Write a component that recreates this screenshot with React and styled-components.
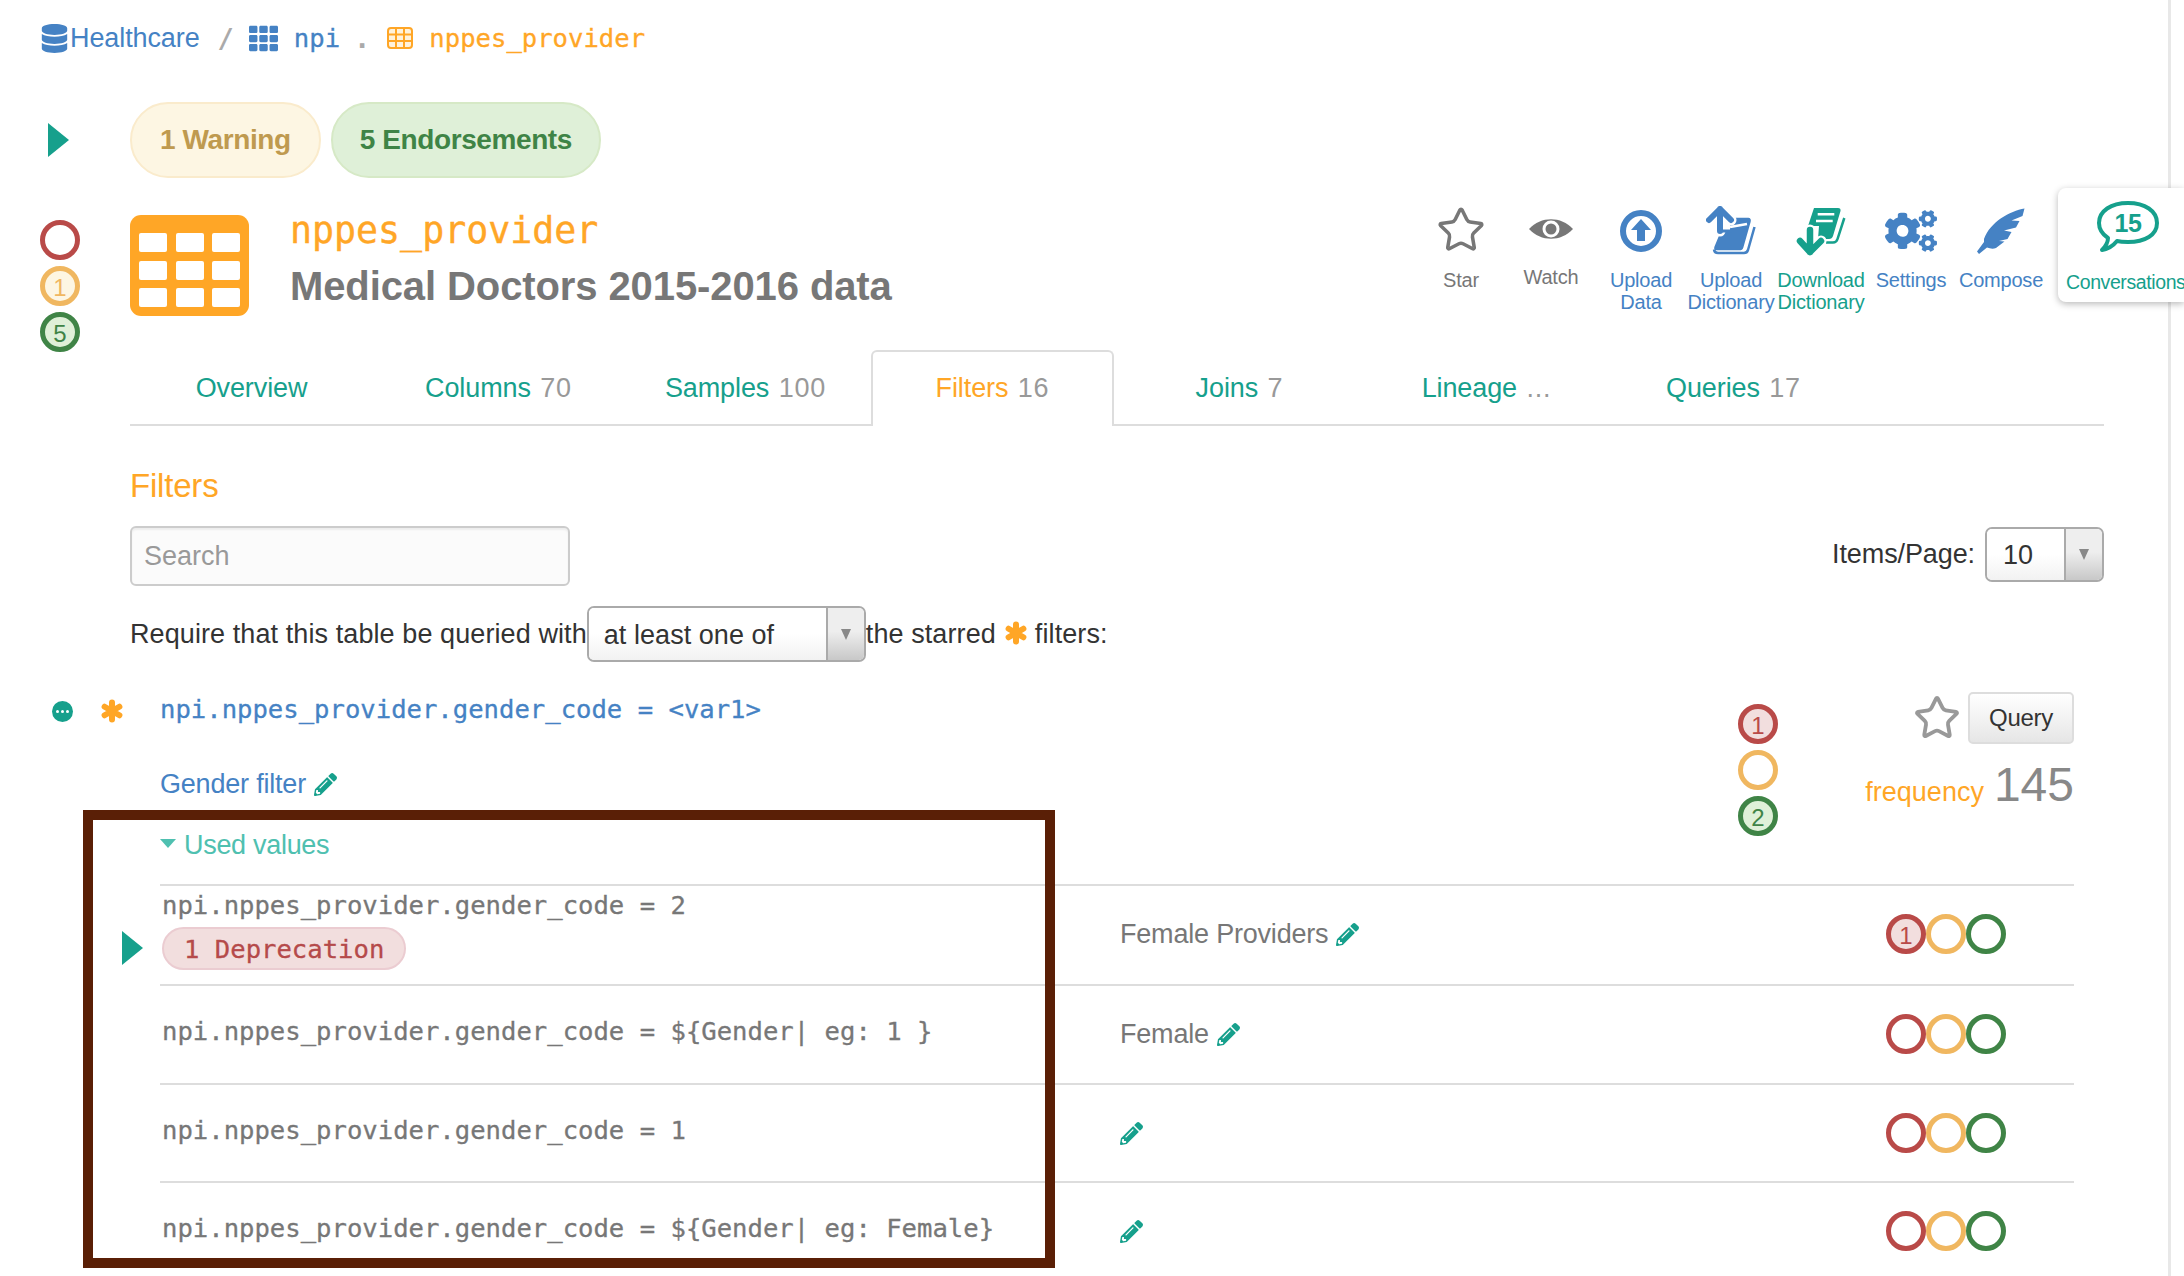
import styled, { createGlobalStyle } from 'styled-components';
import { Star } from 'lucide-react';
import { FaDatabase, FaTh, FaCogs, FaPencilAlt } from 'react-icons/fa';

const BLUE = '#4582c4';
const TEAL = '#16a08c';
const ORANGE = '#ffa626';
const GRAY = '#777';
const LINE = '#ddd';
const SANS = '"Liberation Sans", Arial, sans-serif';
const MONO = '"DejaVu Sans Mono", monospace';

const GlobalStyle = createGlobalStyle`
    html, body { margin: 0; padding: 0; background: #fff; }
    * { box-sizing: border-box; }
`;

const Page = styled.div`
    position: relative;
    width: 2184px;
    height: 1276px;
    overflow: hidden;
    background: #fff;
    font-family: ${SANS};
    font-size: 27px;
    color: #333;
`;

const ScrollTrack = styled.div`
    position: absolute;
    top: 0;
    right: 0;
    bottom: 0;
    width: 16px;
    border-left: 3px solid #e8e8e8;
    background: #fff;
`;

const Breadcrumb = styled.nav`
    position: relative;
    display: flex;
    align-items: center;
    height: 76px;
    padding-left: 40px;
    color: ${BLUE};
`;

const CrumbText = styled.span`
    margin-left: ${p => p.$gap || 0}px;
    font-family: ${p => (p.$mono ? MONO : SANS)};
    font-size: ${p => (p.$mono ? '25.6px' : '27px')};
    color: ${p => p.$color || BLUE};
    letter-spacing: ${p => (p.$mono ? 0 : '-0.1px')};
    -webkit-text-stroke: ${p => (p.$mono ? '0.3px' : 0)};
`;

const CrumbMark = styled.span`
    margin-left: ${p => p.$gap}px;
    font-family: ${MONO};
    font-size: 27px;
    font-weight: bold;
    color: #aaa;
`;

const CrumbIcon = styled.span`
    display: flex;
    margin-left: ${p => p.$gap || 0}px;
`;

const AlertRow = styled.div`
    display: flex;
    align-items: center;
    margin-top: 26px;
    padding-left: 48px;
    height: 76px;
`;

const Caret = styled.div`
    width: 0;
    height: 0;
    border-top: 17px solid transparent;
    border-bottom: 17px solid transparent;
    border-left: 21px solid ${TEAL};
`;

const Pills = styled.div`
    display: flex;
    gap: 10px;
    margin-left: 61px;
`;

const AlertPill = styled.div`
    display: flex;
    align-items: center;
    height: 76px;
    padding: 0 ${p => p.$pad}px;
    border-radius: 38px;
    border: 2px solid ${p => p.$border};
    background: ${p => p.$bg};
    color: ${p => p.$color};
    font-size: 28px;
    font-weight: bold;
    letter-spacing: -0.4px;
`;

const HeaderRow = styled.header`
    display: flex;
    height: 150px;
    margin-top: 22px;
`;

const SideStack = styled.div`
    display: flex;
    flex-direction: column;
    gap: 6px;
    width: 130px;
    padding: 20px 0 0 40px;
`;

const Circle = styled.div`
    display: flex;
    align-items: center;
    justify-content: center;
    flex: none;
    width: 40px;
    height: 40px;
    border-radius: 50%;
    border: 5px solid ${p => p.$color};
    background: ${p => p.$bg || '#fff'};
    color: ${p => p.$color};
    font-size: 24px;
    line-height: 1;
    padding-top: 3px;
`;

const BigIcon = styled.svg`
    flex: none;
    width: 119px;
    height: 101px;
    margin-top: 15px;
`;

const TitleBlock = styled.div`
    margin: 8px 0 0 41px;
`;

const TableName = styled.h1`
    margin: 0;
    font-family: ${MONO};
    font-size: 36.6px;
    font-weight: normal;
    line-height: 46px;
    color: ${ORANGE};
    -webkit-text-stroke: 0.4px;
`;

const TableDesc = styled.h2`
    margin: 9px 0 0;
    font-size: 40px;
    font-weight: bold;
    line-height: 46px;
    color: ${GRAY};
    letter-spacing: -0.1px;
`;

const Actions = styled.div`
    position: relative;
    z-index: 2;
    display: flex;
    align-items: flex-start;
    margin-left: auto;
`;

const Action = styled.div`
    display: flex;
    flex-direction: column;
    align-items: center;
    width: 90px;
    color: ${p => p.$color};
    font-size: 20px;
    line-height: 22px;
    text-align: center;
    letter-spacing: -0.2px;
    white-space: nowrap;
`;

const ActionIcon = styled.div`
    display: flex;
    align-items: center;
    justify-content: center;
    height: 62px;
    margin-bottom: ${p => p.$after ?? 7}px;
    padding-bottom: ${p => p.$raise || 0}px;
`;

const ConversationBox = styled.div`
    display: flex;
    flex-direction: column;
    width: 126px;
    height: 114px;
    margin: -12px 0 0 12px;
    padding: 11px 0 0 8px;
    border-radius: 8px 0 0 8px;
    background: #fff;
    box-shadow: 0 2px 7px rgba(0, 0, 0, 0.28);
    color: ${TEAL};
    font-size: 19.5px;
    letter-spacing: -0.4px;
    white-space: nowrap;
`;

const Bubble = styled.div`
    position: relative;
    width: 66px;
    height: 60px;
    margin: 0 0 12px 29px;
`;

const BubbleCount = styled.span`
    position: absolute;
    top: 10px;
    left: 0;
    width: 66px;
    text-align: center;
    font-size: 25px;
    font-weight: bold;
    line-height: 28px;
`;

const TabBar = styled.div`
    display: flex;
    gap: 4px;
    height: 76px;
    margin: 0 80px 0 130px;
    border-bottom: 2px solid ${LINE};
`;

const Tab = styled.div`
    width: 243px;
    height: ${p => (p.$active ? '76px' : '74px')};
    padding-top: ${p => (p.$active ? '21px' : '23px')};
    text-align: center;
    font-size: 27px;
    letter-spacing: -0.1px;
    color: ${p => (p.$active ? ORANGE : TEAL)};
    background: #fff;
    ${p => p.$active && `
        border: 2px solid ${LINE};
        border-bottom: none;
        border-radius: 6px 6px 0 0;
    `}
`;

const TabCount = styled.span`
    margin-left: 2px;
    color: #999;
    letter-spacing: 0.8px;
`;

const Content = styled.section`
    margin: 0 80px 0 130px;
`;

const Heading = styled.h3`
    margin: 40px 0 0;
    font-size: 33px;
    font-weight: normal;
    line-height: 40px;
    color: ${ORANGE};
    letter-spacing: -0.2px;
`;

const Toolbar = styled.div`
    display: flex;
    align-items: center;
    justify-content: space-between;
    margin-top: 20px;
    height: 60px;
`;

const SearchBox = styled.input`
    width: 440px;
    height: 60px;
    padding: 0 12px;
    border: 2px solid #ccc;
    border-radius: 6px;
    background: #fbfbfb;
    box-shadow: inset 0 2px 2px rgba(0, 0, 0, 0.06);
    font-family: ${SANS};
    font-size: 27px;
    &::placeholder { color: #999; opacity: 1; }
`;

const PageSize = styled.div`
    display: flex;
    align-items: center;
    gap: 10px;
    margin-top: -4px;
    letter-spacing: -0.1px;
`;

const Select = styled.div`
    display: flex;
    width: ${p => p.$width}px;
    height: ${p => p.$height}px;
    border: 2px solid #aaa;
    border-radius: 7px;
    overflow: hidden;
`;

const SelectValue = styled.div`
    flex: 1;
    display: flex;
    align-items: center;
    padding: 2px 0 0 ${p => p.$pad}px;
    background: linear-gradient(#fff 50%, #f2f2f2);
    color: #333;
    font-size: 27px;
    letter-spacing: 0.05px;
`;

const SelectArrow = styled.div`
    display: flex;
    align-items: center;
    justify-content: center;
    width: 38px;
    border-left: 2px solid #aaa;
    background: linear-gradient(#eee 45%, #c8c8c8);
    &::after {
        content: '';
        border-top: 11px solid #888;
        border-left: 5px solid transparent;
        border-right: 5px solid transparent;
    }
`;

const RequireRow = styled.div`
    display: flex;
    align-items: center;
    margin-top: 20px;
    height: 56px;
    line-height: 52px;
    letter-spacing: 0.09px;
    white-space: pre;
`;

const InlineStar = styled.span`
    display: flex;
    margin: -2px 7px 0 8px;
`;

const FilterBlock = styled.section`
    display: grid;
    grid-template-columns: 160px 1fr;
    margin-top: 30px;
    padding-right: 110px;
`;

const FilterGutter = styled.div`
    display: flex;
    align-items: flex-start;
    gap: 27px;
    padding: 7px 0 0 52px;
`;

const DotBadge = styled.div`
    display: flex;
    align-items: center;
    justify-content: center;
    gap: 2px;
    width: 21px;
    height: 21px;
    margin-top: 2px;
    border-radius: 50%;
    background: ${TEAL};
`;

const Dot = styled.i`
    width: 3px;
    height: 3px;
    border-radius: 50%;
    background: #fff;
`;

const FilterTop = styled.div`
    display: flex;
    height: 192px;
`;

const FilterInfo = styled.div`
    flex: 1;
`;

const FilterCode = styled.div`
    font-family: ${MONO};
    font-size: 25.6px;
    line-height: 34px;
    color: ${BLUE};
    -webkit-text-stroke: 0.3px;
`;

const FilterName = styled.div`
    display: flex;
    align-items: center;
    gap: 8px;
    margin-top: 41px;
    line-height: 34px;
    color: ${BLUE};
    letter-spacing: -0.2px;
`;

const UsedToggle = styled.div`
    display: flex;
    align-items: center;
    gap: 8px;
    margin-top: 27px;
    line-height: 34px;
    color: #4fc0b0;
    letter-spacing: -0.3px;
    &::before {
        content: '';
        margin-top: -4px;
        border-top: 9px solid #4fc0b0;
        border-left: 8px solid transparent;
        border-right: 8px solid transparent;
    }
`;

const FilterBadges = styled.div`
    display: flex;
    flex-direction: column;
    gap: 6px;
    margin-top: 12px;
`;

const FilterStats = styled.div`
    display: flex;
    flex-direction: column;
    align-items: flex-end;
    width: 296px;
`;

const QueryRow = styled.div`
    display: flex;
    align-items: center;
    gap: 7px;
`;

const QueryButton = styled.button`
    width: 106px;
    height: 52px;
    border: 2px solid ${LINE};
    border-radius: 5px;
    background: linear-gradient(#fff, #e6e6e6);
    font-family: ${SANS};
    font-size: 24px;
    letter-spacing: -0.3px;
    color: #333;
`;

const FrequencyRow = styled.div`
    display: flex;
    align-items: baseline;
    gap: 10px;
    margin-top: 13px;
    line-height: 56px;
`;

const FrequencyLabel = styled.span`
    font-size: 27px;
    color: ${ORANGE};
`;

const FrequencyValue = styled.span`
    font-size: 48px;
    color: #888;
`;

const ValueRow = styled.div`
    position: relative;
    display: grid;
    grid-template-columns: 960px 766px 188px;
    height: ${p => p.$height}px;
    border-top: 2px solid ${LINE};
`;

const RowCaret = styled(Caret)`
    position: absolute;
    left: -38px;
    top: 45px;
`;

const ValueCode = styled.div`
    padding: 0 0 0 2px;
    font-family: ${MONO};
    font-size: 25.6px;
    line-height: ${p => (p.$first ? '34px' : '44px')};
    padding-top: ${p => (p.$first ? '2px' : '23px')};
    color: ${GRAY};
    white-space: pre;
    -webkit-text-stroke: 0.3px;
`;

const DeprecationPill = styled.div`
    display: inline-flex;
    align-items: center;
    height: 43px;
    margin-top: 5px;
    padding: 0 20px;
    border: 2px solid #ebccd1;
    border-radius: 22px;
    background: #f2dede;
    color: #b54a4a;
`;

const ValueDesc = styled.div`
    display: flex;
    align-items: center;
    gap: 8px;
    align-self: start;
    height: 44px;
    margin-top: 26px;
    color: ${GRAY};
    letter-spacing: -0.2px;
`;

const ValueBadges = styled.div`
    display: flex;
    align-self: start;
    margin-top: 28px;
`;

const Pencil = styled(FaPencilAlt)`
    flex: none;
    color: ${TEAL};
    font-size: 23px;
`;

const Annotation = styled.div`
    position: absolute;
    left: 83px;
    top: 810px;
    width: 972px;
    height: 458px;
    border: 10px solid #5a1f06;
    pointer-events: none;
`;

const RED = { color: '#b94a48', bg: '#f2dede' };
const AMBER = { color: '#f0b760', bg: '#fdf6e3' };
const GREEN = { color: '#3f8446', bg: '#dff0d8' };

function Badge({ tone, count }) {
    return (
        <Circle $color={tone.color} $bg={count ? tone.bg : '#fff'}>
            {count}
        </Circle>
    );
}

function TableGlyph() {
    const xs = [9, 46, 82];
    const ys = [18, 46, 73];
    return (
        <BigIcon viewBox="0 0 119 101">
            <rect width="119" height="101" rx="11" fill={ORANGE} />
            {ys.map(y => xs.map(x => (
                <rect key={`${x}-${y}`} x={x} y={y} width="28" height="19" rx="2" fill="#fff" />
            )))}
        </BigIcon>
    );
}

function SmallTable() {
    return (
        <svg width="26" height="22" viewBox="0 0 26 22" fill="none" stroke={ORANGE}>
            <rect x="1" y="1" width="24" height="20" rx="3" strokeWidth="2" fill="#fff2dc" />
            <path d="M1 7.5H25M1 14H25M9 1V21M17 1V21" strokeWidth="2" />
        </svg>
    );
}

function AsteriskIcon() {
    return (
        <svg width="24" height="24" viewBox="0 0 24 24" fill="none" stroke={ORANGE} strokeWidth="6" strokeLinecap="round">
            <path d="M12 3.5V20.5M4.6 7.75L19.4 16.25M19.4 7.75L4.6 16.25" />
        </svg>
    );
}

function EyeIcon() {
    return (
        <svg width="44" height="20" viewBox="0 0 44 20">
            <path d="M0 10C12 -3 32 -3 44 10C32 23 12 23 0 10Z" fill={GRAY} />
            <circle cx="22" cy="10" r="8.5" fill="#fff" />
            <circle cx="22" cy="10" r="5.5" fill={GRAY} />
        </svg>
    );
}

function UploadIcon() {
    return (
        <svg width="42" height="42" viewBox="0 0 42 42">
            <circle cx="21" cy="21" r="18" fill="#fff" stroke={BLUE} strokeWidth="6" />
            <path d="M21 9L31 20H25V31H17V20H11Z" fill={BLUE} />
        </svg>
    );
}

function UploadBookIcon() {
    return (
        <svg width="50" height="50" viewBox="0 0 50 50" fill="none">
            <path d="M24 11.7H42.3Q45.5 12 44.7 15.7L37.3 41.7Q36.5 44.3 33.3 44.3H10.7Q7.5 44.3 8.3 41L14.5 26H24Z" fill={BLUE} />
            <path d="M24 21L41 18" stroke="#fff" strokeWidth="2.5" />
            <path d="M48.5 21L42 44Q41 47 38 47H12Q8.5 47 8 43.5" stroke={BLUE} strokeWidth="2.5" />
            <path d="M14 3V25M3 14L14 3L25 14" stroke="#fff" strokeWidth="11" strokeLinecap="round" strokeLinejoin="round" />
            <path d="M14 3V25M3 14L14 3L25 14" stroke={BLUE} strokeWidth="6" strokeLinecap="round" strokeLinejoin="round" />
            <path d="M16 25H26" stroke={BLUE} strokeWidth="3" />
        </svg>
    );
}

function DownloadBookIcon() {
    return (
        <svg width="50" height="50" viewBox="0 0 50 50" fill="none">
            <path d="M18 2H42Q45 2 44.5 5L37 30Q36 33 33 33H22L23 20H12Z" fill={TEAL} />
            <path d="M21.7 8.3H38.3M20 15H36.7" stroke="#fff" strokeWidth="2.5" />
            <path d="M48.3 12L41.5 33Q40.5 36.5 37 36.5H30" stroke={TEAL} strokeWidth="2.5" />
            <path d="M14 24V46M4 35L14 46L25 35" stroke="#fff" strokeWidth="11" strokeLinecap="round" strokeLinejoin="round" />
            <path d="M14 24V46M4 35L14 46L25 35" stroke={TEAL} strokeWidth="6.5" strokeLinecap="round" strokeLinejoin="round" />
        </svg>
    );
}

function FeatherIcon() {
    return (
        <svg width="50" height="48" viewBox="0 0 50 48">
            <path d="M48.5 1.5C34 4 14 15 8 32L8 35L1 44.5L3 47L11 40.5Q16 42.5 20 41L28.5 34.5L23 34L31.5 32L35.5 25L28 23.5L40 20.5L43.5 14L35.5 13.5L46.5 9Z" fill={BLUE} />
        </svg>
    );
}

function BubbleIcon() {
    return (
        <svg width="66" height="60" viewBox="0 0 66 60" fill="none">
            <path d="M4 24C4 12 16 4 33 4C50 4 62 12 62 24C62 36 50 43 33 43C29 43 26 43 22 42C18 47 13 50 7 51C11 47 13 43 13 39C7 35 4 30 4 24Z" stroke={TEAL} strokeWidth="4" strokeLinejoin="round" />
        </svg>
    );
}

const TABS = [
    { name: 'Overview' },
    { name: 'Columns', count: '70' },
    { name: 'Samples', count: '100' },
    { name: 'Filters', count: '16', active: true },
    { name: 'Joins', count: '7' },
    { name: 'Lineage', count: '...' },
    { name: 'Queries', count: '17' },
];

const VALUES = [
    { code: 'npi.nppes_provider.gender_code = ${Gender| eg: 1 }', desc: 'Female', height: 99 },
    { code: 'npi.nppes_provider.gender_code = 1', height: 98 },
    { code: 'npi.nppes_provider.gender_code = ${Gender| eg: Female}', height: 94 },
];

function App() {
    return (
        <Page>
            <GlobalStyle />
            <ScrollTrack />
            <Breadcrumb>
                <FaDatabase size={29} color={BLUE} />
                <CrumbText $gap={1}>Healthcare</CrumbText>
                <CrumbMark $gap={18}>/</CrumbMark>
                <CrumbIcon $gap={15}><FaTh size={29} color={BLUE} /></CrumbIcon>
                <CrumbText $gap={16} $mono>npi</CrumbText>
                <CrumbMark $gap={14}>.</CrumbMark>
                <CrumbIcon $gap={17}><SmallTable /></CrumbIcon>
                <CrumbText $gap={16} $mono $color={ORANGE}>nppes_provider</CrumbText>
            </Breadcrumb>

            <AlertRow>
                <Caret />
                <Pills>
                    <AlertPill $pad={28} $bg="#fdf6e3" $border="#faebcc" $color="#bf9a4f">1 Warning</AlertPill>
                    <AlertPill $pad={27} $bg="#dff0d8" $border="#d6e9c6" $color="#3f8446">5 Endorsements</AlertPill>
                </Pills>
            </AlertRow>

            <HeaderRow>
                <SideStack>
                    <Badge tone={RED} />
                    <Badge tone={AMBER} count="1" />
                    <Badge tone={GREEN} count="5" />
                </SideStack>
                <TableGlyph />
                <TitleBlock>
                    <TableName>nppes_provider</TableName>
                    <TableDesc>Medical Doctors 2015-2016 data</TableDesc>
                </TitleBlock>
                <Actions>
                    <Action $color={GRAY}>
                        <ActionIcon $raise={2}><Star size={50} strokeWidth={1.7} color={GRAY} /></ActionIcon>
                        Star
                    </Action>
                    <Action $color={GRAY}>
                        <ActionIcon $after={4} $raise={5}><EyeIcon /></ActionIcon>
                        Watch
                    </Action>
                    <Action $color={BLUE}>
                        <ActionIcon><UploadIcon /></ActionIcon>
                        Upload<br />Data
                    </Action>
                    <Action $color={BLUE}>
                        <ActionIcon><UploadBookIcon /></ActionIcon>
                        Upload<br />Dictionary
                    </Action>
                    <Action $color={TEAL}>
                        <ActionIcon><DownloadBookIcon /></ActionIcon>
                        Download<br />Dictionary
                    </Action>
                    <Action $color={BLUE}>
                        <ActionIcon><FaCogs size={52} color={BLUE} /></ActionIcon>
                        Settings
                    </Action>
                    <Action $color={BLUE}>
                        <ActionIcon><FeatherIcon /></ActionIcon>
                        Compose
                    </Action>
                    <ConversationBox>
                        <Bubble>
                            <BubbleIcon />
                            <BubbleCount>15</BubbleCount>
                        </Bubble>
                        Conversations
                    </ConversationBox>
                </Actions>
            </HeaderRow>

            <TabBar>
                {TABS.map(t => (
                    <Tab key={t.name} $active={t.active}>
                        {t.name} {t.count && <TabCount>{t.count}</TabCount>}
                    </Tab>
                ))}
            </TabBar>

            <Content>
                <Heading>Filters</Heading>
                <Toolbar>
                    <SearchBox placeholder="Search" />
                    <PageSize>
                        Items/Page:
                        <Select $width={119} $height={55}>
                            <SelectValue $pad={16}>10</SelectValue>
                            <SelectArrow />
                        </Select>
                    </PageSize>
                </Toolbar>
                <RequireRow>
                    Require that this table be queried with
                    <Select $width={279} $height={56}>
                        <SelectValue $pad={15}>at least one of</SelectValue>
                        <SelectArrow />
                    </Select>
                    the starred
                    <InlineStar><AsteriskIcon /></InlineStar>
                    filters:
                </RequireRow>
            </Content>

            <FilterBlock>
                <FilterGutter>
                    <DotBadge><Dot /><Dot /><Dot /></DotBadge>
                    <AsteriskIcon />
                </FilterGutter>
                <div>
                    <FilterTop>
                        <FilterInfo>
                            <FilterCode>npi.nppes_provider.gender_code = &lt;var1&gt;</FilterCode>
                            <FilterName>Gender filter <Pencil /></FilterName>
                            <UsedToggle>Used values</UsedToggle>
                        </FilterInfo>
                        <FilterBadges>
                            <Badge tone={RED} count="1" />
                            <Badge tone={AMBER} />
                            <Badge tone={GREEN} count="2" />
                        </FilterBadges>
                        <FilterStats>
                            <QueryRow>
                                <Star size={48} strokeWidth={1.9} color="#999" />
                                <QueryButton>Query</QueryButton>
                            </QueryRow>
                            <FrequencyRow>
                                <FrequencyLabel>frequency</FrequencyLabel>
                                <FrequencyValue>145</FrequencyValue>
                            </FrequencyRow>
                        </FilterStats>
                    </FilterTop>

                    <ValueRow $height={100}>
                        <RowCaret />
                        <ValueCode $first>
                            npi.nppes_provider.gender_code = 2
                            <br />
                            <DeprecationPill>1 Deprecation</DeprecationPill>
                        </ValueCode>
                        <ValueDesc>Female Providers <Pencil /></ValueDesc>
                        <ValueBadges>
                            <Badge tone={RED} count="1" />
                            <Badge tone={AMBER} />
                            <Badge tone={GREEN} />
                        </ValueBadges>
                    </ValueRow>
                    {VALUES.map(v => (
                        <ValueRow key={v.code} $height={v.height}>
                            <ValueCode>{v.code}</ValueCode>
                            <ValueDesc>{v.desc} <Pencil /></ValueDesc>
                            <ValueBadges>
                                <Badge tone={RED} />
                                <Badge tone={AMBER} />
                                <Badge tone={GREEN} />
                            </ValueBadges>
                        </ValueRow>
                    ))}
                </div>
            </FilterBlock>

            <Annotation />
        </Page>
    );
}

export default App;
